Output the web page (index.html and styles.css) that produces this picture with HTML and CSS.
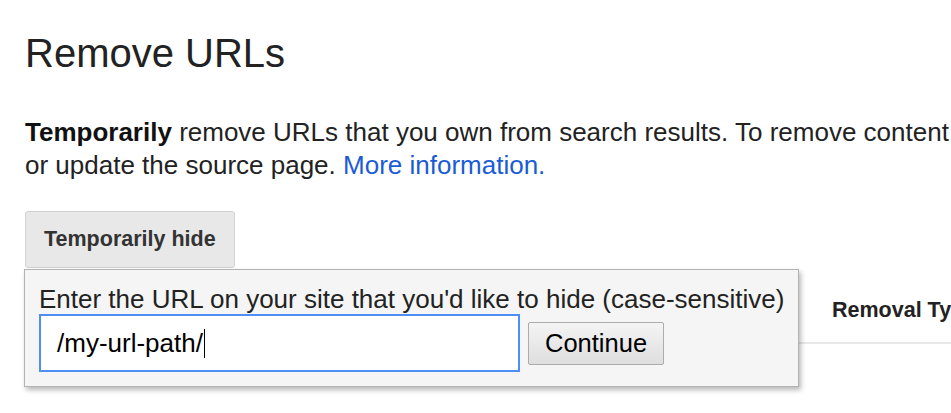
FILE: index.html
```html
<!DOCTYPE html>
<html lang="en">
<head>
  <meta charset="UTF-8" />
  <title>Remove URLs</title>
  <link rel="stylesheet" href="styles.css">
</head>
<body>
  <div class="page">
    <h1>Remove URLs</h1>

    <p class="intro"><strong>Temporarily</strong> remove URLs that you own from search results. To remove content permanently, you must remove<br>
    or update the source page. <a href="#">More information.</a></p>

    <div class="hide-menu">
      <button class="hide-btn">Temporarily hide</button>

      <div class="hide-panel">
        <label class="hide-label">Enter the URL on your site that you'd like to hide (case-sensitive)</label>
        <div class="hide-row">
          <div class="url-field">/my-url-path/<span class="caret"></span></div>
          <button class="continue-btn">Continue</button>
        </div>
      </div>
    </div>

    <div class="removals">
      <div class="removals-head">
        <div class="col-url"></div>
        <div class="col-type">Removal Type</div>
        <div class="col-status">Status</div>
      </div>
    </div>
  </div>
</body>
</html>
```

FILE: styles.css
```css
* {
  box-sizing: border-box;
}
html {
  overflow: hidden;
}
body {
  margin: 0;
  padding: 0;
  min-height: 100vh;
  background: #fff;
  font-family: "Liberation Sans", Arial, sans-serif;
  color: #222;
}
.page {
  width: 1400px;
  padding-left: 25px;
}
h1 {
  margin: 30px 0 0;
  font-size: 40px;
  font-weight: normal;
  line-height: 46px;
}
.intro {
  margin: 40px 0 0;
  font-size: 26px;
  line-height: 32.5px;
  white-space: nowrap;
}
.intro strong {
  color: #111;
}
.intro a {
  color: #1a5bd6;
  text-decoration: none;
}
.hide-menu {
  position: relative;
  margin-top: 30px;
}
.hide-btn {
  height: 57px;
  padding: 0 18px;
  font-family: inherit;
  font-size: 21.5px;
  font-weight: bold;
  color: #333;
  background: #e8e8e8;
  border: 1px solid #d2d2d2;
  border-radius: 3px;
}
.hide-panel {
  position: absolute;
  z-index: 2;
  top: 58px;
  left: -1px;
  padding: 14px 14px 14px;
  background: #f5f5f5;
  border: 1px solid #b3b3b3;
  box-shadow: 2px 3px 5px rgba(0, 0, 0, 0.28);
}
.hide-label {
  display: block;
  font-size: 26px;
  line-height: 30px;
  white-space: nowrap;
  color: #222;
}
.hide-row {
  display: flex;
  align-items: center;
  gap: 8px;
}
.url-field {
  width: 481px;
  height: 58px;
  padding: 0 16px;
  display: flex;
  align-items: center;
  font-size: 26px;
  color: #000;
  background: #fff;
  border: 2px solid #4d8ff5;
}
.caret {
  display: inline-block;
  width: 1px;
  height: 29px;
  margin-left: 1px;
  background: #000;
}
.continue-btn {
  height: 43px;
  padding: 0 16px;
  font-family: inherit;
  font-size: 25.5px;
  color: #000;
  background: linear-gradient(#f4f4f4, #dedede);
  border: 1px solid #acacac;
  border-radius: 2px;
}
.removals {
  margin-top: 12px;
}
.removals-head {
  display: grid;
  grid-template-columns: 807px 260px 200px;
  padding: 18px 0 20px;
  font-size: 21.5px;
  font-weight: bold;
  line-height: 24px;
  color: #222;
  border-bottom: 2px solid #e8e8e8;
}
```
